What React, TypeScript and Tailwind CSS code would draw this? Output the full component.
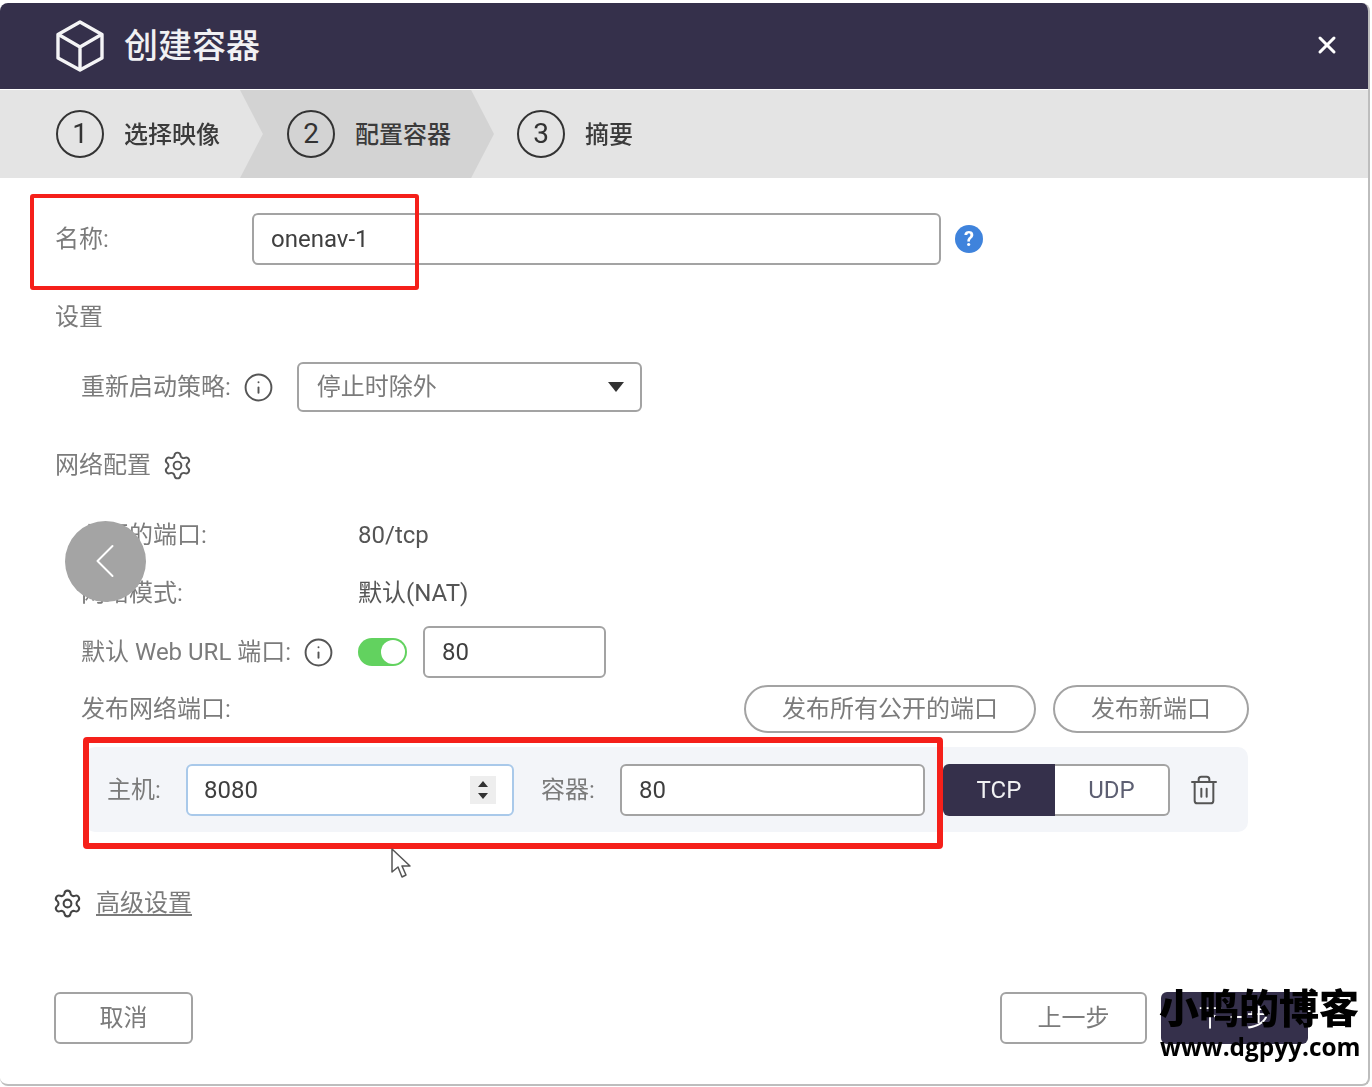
import { ChevronLeft, Info, Settings, Trash2, X } from 'lucide-react'

const FONT = "font-['Roboto','Noto_Sans_CJK_SC',sans-serif]"

function Step({ n, label }: { n: number; label: string }) {
  return (
    <div className="flex items-center">
      <span className="flex size-[48px] items-center justify-center rounded-full border-2 border-[#333] text-[28px] font-normal text-[#333]">
        {n}
      </span>
      <span className="ml-[20px] pt-[2px] text-[24px] font-medium text-[#3b3b3b]">{label}</span>
    </div>
  )
}

function Field({ value, className }: { value: string; className: string }) {
  return (
    <div className={`flex items-center rounded-[6px] border-2 border-[#a3a3a3] bg-white pl-[17px] text-[24px] text-[#3f3f3f] ${className}`}>
      {value}
    </div>
  )
}

function CubeIcon() {
  return (
    <svg width="48" height="52" viewBox="0 0 48 52" fill="none" stroke="#f4f4f6" strokeWidth="3.4" strokeLinejoin="round">
      <path d="M24 2 46 14.5V38L24 50 2 38V14.5Z" />
      <path d="M2.5 14.5 24 27 45.5 14.5M24 27V50" />
    </svg>
  )
}

export default function App() {
  return (
    <div className={`relative h-[1087px] w-[1372px] overflow-hidden bg-white ${FONT}`}>
      {/* dialog */}
      <div className="ml-0 mt-[3px] flex h-[1083px] w-[1370px] flex-col overflow-hidden rounded-[8px] border-b-2 border-r-2 border-[#bdbdbd] bg-white blur-[0.6px]">
        {/* title bar */}
        <div className="flex h-[86px] shrink-0 items-center bg-[#35304b] pl-[56px] pr-[27px]">
          <CubeIcon />
          <span className="ml-[20px] text-[34px] font-medium text-[#f1f1f3]">创建容器</span>
          <X className="ml-auto -mt-[2px] size-[28px] text-white" strokeWidth={2.6} />
        </div>

        {/* steps */}
        <div className="mt-[1px] flex h-[88px] shrink-0 bg-[#e4e4e4]">
          <div className="flex w-[240px] pl-[56px]">
            <Step n={1} label="选择映像" />
          </div>
          <div className="flex w-[254px] bg-[#d3d3d3] pl-[47px] [clip-path:polygon(0_0,91%_0,100%_50%,91%_100%,0_100%,9%_50%)]">
            <Step n={2} label="配置容器" />
          </div>
          <div className="flex pl-[23px]">
            <Step n={3} label="摘要" />
          </div>
        </div>

        {/* form */}
        <div className="flex flex-1 flex-col pl-[55px] text-[24px] text-[#7b7b7b]">
          <div className="mt-[35px] flex h-[52px] items-center">
            <span className="w-[197px]">名称:</span>
            <Field value="onenav-1" className="h-[52px] w-[689px]" />
            <span className="ml-[14px] flex size-[28px] items-center justify-center rounded-full bg-[#3f83dc] text-[20px] font-bold text-white">
              ?
            </span>
          </div>

          <div className="mt-[34px] h-[36px] leading-[36px]">设置</div>

          <div className="mt-[27px] flex h-[50px] items-center pl-[26px]">
            <span>重新启动策略:</span>
            <Info className="ml-[12px] size-[31px] text-[#555]" strokeWidth={1.5} />
            <div className="ml-[23px] flex h-[50px] w-[345px] items-center rounded-[6px] border-2 border-[#a3a3a3] pl-[18px] pr-[16px]">
              停止时除外
              <svg className="ml-auto" width="16" height="10" viewBox="0 0 16 10" fill="#333">
                <path d="M0 0h16L8 10Z" />
              </svg>
            </div>
          </div>

          <div className="mt-[35px] flex h-[36px] items-center">
            网络配置
            <Settings className="ml-[11px] size-[31px] text-[#555]" strokeWidth={1.5} />
          </div>

          <div className="mt-[34px] flex h-[36px] items-center pl-[26px]">
            <span className="w-[277px]">公开的端口:</span>
            <span className="text-[#555]">80/tcp</span>
          </div>
          <div className="mt-[22px] flex h-[36px] items-center pl-[26px]">
            <span className="w-[277px]">网络模式:</span>
            <span className="text-[#555]">默认(NAT)</span>
          </div>

          <div className="mt-[15px] flex h-[52px] items-center pl-[26px]">
            <span className="whitespace-nowrap">默认 Web URL 端口:</span>
            <Info className="ml-[12px] size-[31px] text-[#555]" strokeWidth={1.5} />
            <span className="ml-[24px] flex h-[28px] w-[49px] items-center justify-end rounded-full bg-[#62d25f] pr-[2px]">
              <span className="size-[24px] rounded-full bg-white" />
            </span>
            <Field value="80" className="ml-[16px] h-[52px] w-[183px]" />
          </div>

          <div className="mt-[7px] flex h-[48px] items-center pl-[26px]">
            <span>发布网络端口:</span>
            <button className="ml-auto h-[48px] w-[292px] rounded-full border-2 border-[#a3a3a3] text-[#7b7b7b]">
              发布所有公开的端口
            </button>
            <button className="ml-[17px] mr-[119px] h-[48px] w-[196px] rounded-full border-2 border-[#a3a3a3] text-[#7b7b7b]">
              发布新端口
            </button>
          </div>

          {/* port mapping */}
          <div className="ml-[30px] mt-[14px] flex h-[85px] w-[1163px] items-center rounded-[10px] bg-[#f3f5f9] pl-[22px]">
            <span className="w-[79px]">主机:</span>
            <div className="flex h-[52px] w-[328px] items-center rounded-[6px] border-2 border-[#a9c9ea] bg-white pl-[16px] pr-[16px] text-[24px] text-[#3f3f3f]">
              8080
              <svg className="ml-auto bg-[#eeeeee]" width="26" height="28" viewBox="0 0 26 28" fill="#333">
                <path d="M13 5l5 6H8ZM13 23l5-6H8Z" />
              </svg>
            </div>
            <span className="ml-[27px] w-[79px]">容器:</span>
            <Field value="80" className="h-[52px] w-[305px]" />
            <div className="ml-[18px] flex h-[52px] w-[227px]">
              <span className="flex w-[112px] items-center justify-center rounded-l-[6px] bg-[#35304b] text-[#f1f1f3]">TCP</span>
              <span className="flex flex-1 items-center justify-center rounded-r-[6px] border-2 border-l-0 border-[#a3a3a3] bg-white text-[#5d5f72]">UDP</span>
            </div>
            <Trash2 className="ml-[18px] size-[32px] text-[#555]" strokeWidth={1.5} />
          </div>

          <div className="mt-[53px] flex h-[36px] items-center">
            <Settings className="-ml-[3px] size-[31px] text-[#444]" strokeWidth={1.6} />
            <span className="ml-[13px] underline decoration-2 underline-offset-[3px]">高级设置</span>
          </div>

          {/* footer */}
          <div className="mt-[71px] flex h-[52px] items-center">
            <button className="ml-[-1px] h-[52px] w-[139px] rounded-[6px] border-2 border-[#a3a3a3] text-[#7b7b7b]">取消</button>
            <button className="ml-auto h-[52px] w-[147px] rounded-[6px] border-2 border-[#a3a3a3] text-[#7b7b7b]">上一步</button>
            <button className="ml-[14px] mr-[60px] h-[52px] w-[147px] rounded-[6px] bg-[#35304b] text-white">下一步</button>
          </div>
        </div>
      </div>

      {/* red annotation boxes */}
      <div className="absolute left-[30px] top-[194px] h-[96px] w-[389px] rounded-[3px] border-[4px] border-[#f5201a]" />
      <div className="absolute left-[83px] top-[737px] h-[112px] w-[860px] rounded-[4px] border-[6px] border-[#f5201a]" />

      {/* floating back button */}
      <div className="absolute left-[65px] top-[521px] flex h-[81px] w-[81px] items-center justify-center rounded-full bg-[#a4a4a4]">
        <ChevronLeft className="-ml-[2px] -mt-[2px] size-[60px] text-white" strokeWidth={0.8} />
      </div>

      {/* mouse pointer */}
      <svg className="absolute left-[390px] top-[848px]" width="24" height="32" viewBox="0 0 24 32" fill="white" stroke="#555" strokeWidth="1.5" strokeLinejoin="round">
        <path d="M2 1v23l6-5 4 10 4-2-4-9h8Z" />
      </svg>

      {/* watermark */}
      <div className="absolute left-[1159px] top-[984px] whitespace-nowrap text-[40px] font-black leading-[52px] text-black">小鸣的博客</div>
      <div className="absolute left-[1160px] top-[1030px] whitespace-nowrap font-['Open_Sans',sans-serif] text-[24.4px] font-bold leading-[34px] text-black">www.dgpyy.com</div>
    </div>
  )
}
